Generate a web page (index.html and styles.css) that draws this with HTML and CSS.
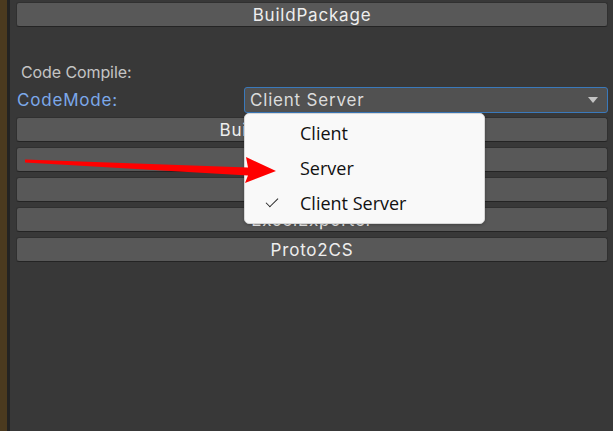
FILE: index.html
```html
<!DOCTYPE html>
<html lang="en">
<head>
  <meta charset="UTF-8">
  <title>Code Compile</title>
  <link rel="stylesheet" href="styles.css">
</head>
<body>
  <div class="scene"></div>
  <div class="divider"></div>

  <div class="panel">
    <button class="btn">BuildPackage</button>

    <div class="section-label">Code Compile:</div>

    <div class="field-row">
      <label class="field-label">CodeMode:</label>
      <div class="select">
        <span>Client Server</span>
        <span class="caret"></span>
      </div>
    </div>

    <div class="btn-list">
      <button class="btn">BuildModelAndHotfix</button>
      <button class="btn">BuildModel</button>
      <button class="btn">BuildHotfix</button>
      <button class="btn">ExcelExporter</button>
      <button class="btn">Proto2CS</button>
    </div>
  </div>

  <!-- open dropdown menu -->
  <ul class="menu">
    <li>Client</li>
    <li>Server</li>
    <li class="checked">Client Server</li>
  </ul>

  <!-- annotation arrow -->
  <svg class="arrow" width="613" height="431" viewBox="0 0 613 431">
    <polygon fill="#ff0000" points="25,159.5 248,167.5 246,157 276,171 245,183 248,175.5 25,162.5"/>
  </svg>
</body>
</html>
```

FILE: styles.css
```css
body {
  margin: 0;
  width: 613px;
  height: 431px;
  overflow: hidden;
  display: flex;
  background: #383838;
  font-family: Inter, "Noto Sans", sans-serif;
  position: relative;
}
.scene {
  width: 7px;
  background: #4b3a1f;
}
.divider {
  width: 3px;
  background: #232323;
}
.panel {
  flex: 1;
  display: flex;
  flex-direction: column;
  padding: 2px 5px 0 6px;
}
.btn {
  display: block;
  width: 100%;
  height: 25px;
  padding: 0;
  background: #585858;
  color: #eeeeee;
  border: 1px solid #303030;
  border-bottom-color: #242424;
  border-radius: 3px;
  font-family: inherit;
  font-size: 17px;
  letter-spacing: 0.8px;
}
.section-label {
  margin-top: 33px;
  height: 24px;
  line-height: 24px;
  padding-left: 5px;
  color: #c4c4c4;
  font-size: 16px;
  letter-spacing: -0.1px;
}
.field-row {
  margin-top: 3px;
  display: flex;
  height: 26px;
}
.field-label {
  width: 227px;
  padding-left: 1px;
  line-height: 26px;
  color: #7ca8ea;
  font-size: 17px;
  letter-spacing: 0.8px;
}
.select {
  flex: 1;
  display: flex;
  align-items: center;
  justify-content: space-between;
  background: #515151;
  border: 1px solid #3a79bb;
  border-radius: 3px;
  padding: 0 9px 0 5px;
  color: #dcdcdc;
  font-size: 17px;
  letter-spacing: 0.8px;
}
.caret {
  width: 0;
  height: 0;
  border-left: 5px solid transparent;
  border-right: 5px solid transparent;
  border-top: 6px solid #c4c4c4;
}
.btn-list {
  margin-top: 4px;
}
.btn-list .btn {
  margin-bottom: 5px;
}
.menu {
  position: absolute;
  left: 244px;
  top: 113px;
  width: 239px;
  height: 107px;
  margin: 0;
  padding: 2px 0 0;
  list-style: none;
  background: #f9f9f9;
  border: 1px solid #d6d6d6;
  border-radius: 5px;
  box-shadow: 0 1px 3px rgba(0, 0, 0, 0.25);
  font-family: "Open Sans", "Noto Sans CJK SC", sans-serif;
  font-size: 18px;
  color: #111111;
}
.menu li {
  height: 35px;
  line-height: 35px;
  padding-left: 55px;
  position: relative;
}
.menu li.checked::before {
  content: "";
  position: absolute;
  left: 21px;
  top: 12px;
  width: 11px;
  height: 5px;
  border-left: 1.3px solid #222222;
  border-bottom: 1.3px solid #222222;
  transform: rotate(-45deg);
}
.arrow {
  position: absolute;
  left: 0;
  top: 0;
  pointer-events: none;
}
```
